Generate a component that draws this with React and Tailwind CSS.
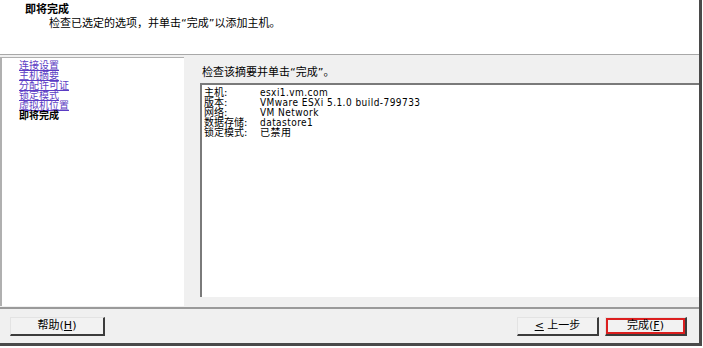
const summary = [
  ['主机:', 'esxi1.vm.com'],
  ['版本:', 'VMware ESXi 5.1.0 build-799733'],
  ['网络:', 'VM Network'],
  ['数据存储:', 'datastore1'],
  ['锁定模式:', '已禁用'],
];

const steps = ['连接设置', '主机摘要', '分配许可证', '锁定模式', '虚拟机位置'];

const cjk = "font-['DejaVu_Sans','Noto_Sans_CJK_SC',sans-serif]";

function WinButton({ children, width, highlight }) {
  return (
    <div className={`h-[19px] ${width} border-t border-l border-[#e3e3e3] border-r-2 border-b-2 border-r-[#3c3c3c] border-b-[#3c3c3c] bg-[#f2f2f2]`}>
      <div className={`h-full w-full flex items-center justify-center text-[11px] leading-none text-black ${highlight ? 'border-2 border-[#dc1f1f]' : ''}`}>
        {children}
      </div>
    </div>
  );
}

export default function App() {
  return (
    <div className={`w-[703px] h-[348px] bg-white overflow-hidden ${cjk}`}>
      <div className="w-[702px] h-[346px] flex flex-col border-r-[3px] border-b-[3px] border-[#4a4a4a]">
        {/* Header */}
        <div className="h-[55px] shrink-0 bg-white border-b border-[#a8a8a8] pl-[25px] pt-[4px]">
          <div className="text-[11px] leading-[12px] font-bold text-black">即将完成</div>
          <div className="text-[11px] leading-[12px] text-black pl-[24px] mt-[2px]">
            检查已选定的选项，并单击“完成”以添加主机。
          </div>
        </div>

        {/* Body */}
        <div className="flex-1 flex bg-[#f0f0f0] pt-[2px]">
          <div className="w-[184px] shrink-0 bg-white border-l-2 border-t border-[#b0b0b0] pl-[17px] pt-[3px] mb-[1px]">
            {steps.map(s => (
              <div key={s} className="text-[10px] leading-[10px] text-[#5b3cc4] underline">{s}</div>
            ))}
            <div className="text-[10px] leading-[10px] font-bold text-black">即将完成</div>
          </div>
          <div className="flex-1 flex flex-col pl-[16px] pb-[10px]">
            <div className="text-[11px] leading-[12px] text-black mt-[10px] mb-[4px] pl-[2px]">
              检查该摘要并单击“完成”。
            </div>
            <div className="flex-1 bg-white border-l-2 border-t-2 border-[#7a7a7a] pl-[2px] pt-[3px]">
              {summary.map(([k, v]) => (
                <div key={k} className="flex items-center h-[10px] text-[10px] leading-[10px] text-black">
                  <span className="w-[56px] shrink-0">{k}</span>
                  <span className="tracking-[0.45px] font-['DejaVu_Sans_Condensed','Noto_Sans_CJK_SC',sans-serif]">{v}</span>
                </div>
              ))}
            </div>
          </div>
        </div>

        {/* Footer */}
        <div className="h-[36px] shrink-0 bg-[#f0f0f0] border-t-2 border-[#9a9a9a] flex items-center pl-[10px] pr-[12px]">
          <WinButton width="w-[95px]">帮助(<span className="underline">H</span>)</WinButton>
          <div className="flex-1" />
          <WinButton width="w-[82px]"><span className="underline">&lt;</span>&nbsp;上一步</WinButton>
          <div className="w-[6px]" />
          <WinButton width="w-[82px]" highlight>完成(<span className="underline">F</span>)</WinButton>
        </div>
      </div>
    </div>
  );
}
